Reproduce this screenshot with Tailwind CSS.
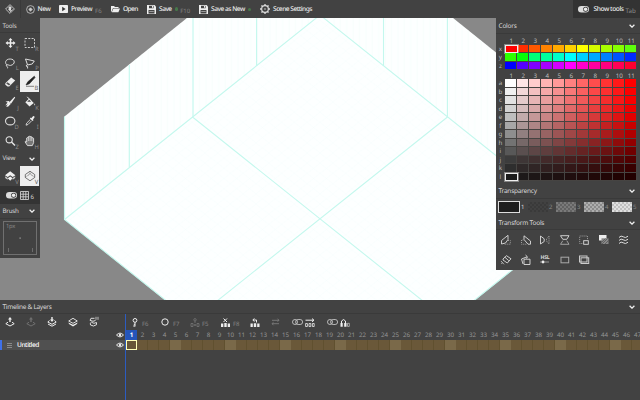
<!DOCTYPE html>
<html lang="en">
<head>
<meta charset="utf-8">
<title>Isometric editor</title>
<script src="https://cdn.jsdelivr.net/npm/@tailwindcss/browser@4"></script>
</head>
<body class="w-[640px] h-[400px] overflow-hidden bg-[#424242] text-[#d8d8d8] text-[6.6px] tracking-[-0.22px] [text-rendering:geometricPrecision] leading-none font-['Noto_Sans','Open_Sans',sans-serif] flex flex-col">

<svg class="absolute w-0 h-0">
  <defs>
    <pattern id="chk" width="4" height="4" patternUnits="userSpaceOnUse"><path d="M0 0H2V2H0ZM2 2H4V4H2Z" fill="#fff" fill-opacity=".3"/></pattern>
    <symbol id="chevron" viewBox="0 0 6 4"><path d="M.6.7 3 3.1 5.4.7" fill="none" stroke="#eee" stroke-width="1.3"/></symbol>
    <symbol id="disk" viewBox="0 0 9 9"><path d="M0 0H7.5L9 1.5V9H0Z" fill="#eee"/><path d="M2 .7H6.6V3.2H2ZM1.5 5H7.5V8.5H1.5Z" fill="#444"/><path d="M5 1H6V2.8H5ZM2.2 6H6.8V6.6H2.2Z" fill="#eee"/></symbol>
    <symbol id="toggle" viewBox="0 0 11 7"><rect width="11" height="6.6" rx="3.3" fill="#ddd"/><circle cx="7.6" cy="3.3" r="2.5" fill="#333"/><circle cx="7.6" cy="3.3" r="1.8" fill="#eee"/></symbol>
    <symbol id="eye" viewBox="0 0 8 6"><path d="M.5 3Q4-.8 7.5 3 4 6.8.5 3Z" fill="none" stroke="#e5e5e5"/><circle cx="4" cy="3" r="1.3" fill="#e5e5e5"/></symbol>
    <symbol id="link" viewBox="0 0 11 6"><g fill="none" stroke="#c4c4c4" stroke-width=".9"><circle cx="3" cy="3" r="2.5"/><rect x="3.6" y=".5" width="7" height="5" rx="2.5"/></g></symbol>
  </defs>
</svg>

<header class="h-[18px] shrink-0 bg-[#424242] flex items-center font-medium text-[#ececec] whitespace-nowrap">
  <div class="w-[21px] h-full flex items-center justify-center border-r border-[#3a3a3a]">
    <svg class="w-[10px] h-[10px]" viewBox="0 0 10 10" fill="none" stroke="#ccc" stroke-width=".9"><path d="M5 .6 9.4 5 5 9.4 .6 5Z"/><path d="M5 2 7.2 4.300H6V6.200L5 7.200 3.200 5.400 4.300 4.300H2.800Z" fill="#ddd" stroke="none"/><path d="M7.500 5.500 5 8"/></svg>
  </div>
  <div class="w-[38px] shrink-0 pl-[5px] flex items-center gap-[2.5px]">
    <svg class="w-[9px] h-[9px]" viewBox="0 0 9 9" fill="none" stroke="#ccc" stroke-width=".8"><circle cx="4.5" cy="4.5" r="3.9"/><path d="M4.5 2.8 6.2 4.5 4.5 6.2 2.8 4.5Z" fill="#ccc"/></svg><span class="tracking-[-0.42px]">New</span>
  </div>
  <div class="w-[52px] shrink-0 flex items-center gap-[3px]">
    <svg class="w-[9px] h-[8px]" viewBox="0 0 9 8"><rect width="9" height="8" rx=".8" fill="#eee"/><path d="M3.2 1.8 6.6 4 3.2 6.2Z" fill="#333"/></svg><span class="tracking-[-0.5px]">Preview</span><span class="text-[6px] tracking-normal text-[#858585] font-normal pt-[4px]">F6</span>
  </div>
  <div class="w-[36px] shrink-0 flex items-center gap-[3px]">
    <svg class="w-[9px] h-[8px]" viewBox="0 0 9 8" fill="#eee"><path d="M0 7V1H3L4 2H7.5V3H2L.6 6.5ZM2.4 3.6H9L7.4 7.3H.8Z"/></svg><span class="tracking-[-0.6px]">Open</span>
  </div>
  <div class="w-[52px] shrink-0 flex items-center gap-[3px]">
    <svg class="w-[9px] h-[9px]"><use href="#disk"/></svg><span class="tracking-[-0.5px]">Save</span><span class="w-[3.5px] h-[3.5px] rounded-full bg-[#46784a]"></span><span class="text-[6px] tracking-normal text-[#858585] font-normal pt-[4px] -ml-[1px]">F10</span>
  </div>
  <div class="w-[61px] shrink-0 flex items-center gap-[3px]">
    <svg class="w-[9px] h-[9px]"><use href="#disk"/></svg><span class="tracking-[-0.48px]">Save as New</span><span class="w-[3px] h-[3px] rounded-full bg-[#46784a]"></span>
  </div>
  <div class="flex items-center gap-[3px]">
    <svg class="w-[10px] h-[10px]" viewBox="0 0 9 9" fill="none" stroke="#ddd"><circle cx="4.5" cy="4.5" r="3"/><circle cx="4.5" cy="4.5" r=".7" fill="#ddd" stroke="none"/><path d="M4.5 0V1.5M4.5 7.5V9M0 4.5H1.5M7.5 4.5H9M1.3 1.3 2.3 2.3M6.7 6.7 7.7 7.7M7.7 1.3 6.7 2.3M2.3 6.7 1.3 7.7" stroke-width="1.2"/></svg><span class="tracking-[-0.5px]">Scene Settings</span>
  </div>
  <div class="ml-auto w-[67px] h-full bg-[#333] flex items-center pl-[5px]">
    <svg class="w-[11px] h-[7px] mr-[4.5px]"><use href="#toggle"/></svg><span class="tracking-[-0.42px]">Show tools</span><span class="text-[6.2px] tracking-normal text-[#8a8a8a] font-normal pt-[5px] ml-[2px]">Tab</span>
  </div>
</header>

<main class="h-[282px] shrink-0 relative bg-[#888] flex justify-between items-start">
  <svg class="absolute inset-0 w-[640px] h-[282px]" viewBox="0 18 640 282">
    <defs><pattern id="walls" width="6.4" height="50" patternUnits="userSpaceOnUse"><path d="M1 0V50" stroke="#f4fdfb" stroke-width=".7"/></pattern>
    <pattern id="tiles" width="12.8" height="10.2" patternUnits="userSpaceOnUse"><path d="M0 0 12.8 10.2M12.8 0 0 10.2" stroke="#f5fefd" stroke-width=".6"/></pattern></defs>
    <path d="M64.5 116.5 320-89 575.5 116.5V219.5L320 424.5 64.5 219.5Z" fill="#fdffff"/>
    <path d="M64.5 219 320 15 575.5 219 320 423Z" fill="url(#tiles)"/>
    <path d="M64.5 116.5 187 18H316L64.5 219ZM453 18H324L575.5 219V116.5Z" fill="url(#walls)"/>
    <g fill="none" stroke="#c4f8ee" stroke-width="1.1"><path d="M64.5 219.5 320 15 575.5 219M192.5 117 448 321M447.5 117 192 321"/><path d="M64.5 116.5V219.5L320 423.5 575.5 219.5V116.5M129.3 65V167M193 18V117M256.6 18V66M383.5 18V66M447.4 18V117"/></g>
  </svg>

  <aside class="relative w-[40px] h-[240px] bg-[#424242] flex flex-col">
    <div class="h-[15px] pl-[2.5px] pt-[2px] flex items-center border-b border-[#3a3a3a] text-[6.2px]">Tools</div>
    <div class="grid grid-cols-[20px_20px] auto-rows-[19.6px] h-[118px] text-[5.8px] text-[#8e8e8e]">
      <div class="relative"><svg class="w-5 h-5" viewBox="0 0 20 20"><path d="M10.5 5 12.6 7.3H11.2V9.3H13.2V7.9L15.5 10 13.2 12.1V10.7H11.2V12.7H12.6L10.5 15 8.4 12.7H9.8V10.7H7.8V12.1L5.5 10 7.8 7.9V9.3H9.8V7.3H8.4Z" fill="#eee"/></svg><span class="absolute right-[1.5px] bottom-0">T</span></div>
      <div class="relative"><svg class="w-5 h-5" viewBox="0 0 20 20"><rect x="5" y="5.5" width="9.5" height="9" fill="none" stroke="#ccc" stroke-dasharray="2 1.3"/></svg><span class="absolute right-[1.5px] bottom-0">R</span></div>
      <div class="relative"><svg class="w-5 h-5" viewBox="0 0 20 20" fill="none" stroke="#ddd"><path d="M7.2 12.2C4.5 10.5 5 6 10.2 6S15.7 11.5 10.5 12.4C9 12.7 7.5 11 6.5 12S8.5 14 7.5 15.3"/></svg><span class="absolute right-[1.5px] bottom-0">L</span></div>
      <div class="relative"><svg class="w-5 h-5" viewBox="0 0 20 20" fill="none" stroke="#ddd"><path d="M7.5 11.8 5.5 6 14.3 8 12.2 11 7.5 12ZM7.2 11.5 6 13 7.6 13.5V15.5"/></svg><span class="absolute right-[1.5px] bottom-0">P</span></div>
      <div class="relative"><svg class="w-5 h-5" viewBox="0 0 20 20"><path d="M5.3 11.2 11.2 5.5 15.2 8.4 9.2 14.4H7.6L5.3 12.7Z" fill="#eee"/><path d="M6.2 11.5 9 13.6 10.4 12.2 7.4 10.2Z" fill="#555"/></svg><span class="absolute right-[1.5px] bottom-0">E</span></div>
      <div class="relative bg-[#eee] -mt-px mr-px"><svg class="w-5 h-5" viewBox="0 0 20 20"><path d="M14.3 5.2 15 6.6 9.4 12.8 6 14 7.8 10.8Z" fill="#222" stroke="#222" stroke-width=".6"/><path d="M6 15.3H14" stroke="#666" stroke-width=".8"/></svg><span class="absolute right-[1px] bottom-0 text-[#666]">B</span></div>
      <div class="relative"><svg class="w-5 h-5" viewBox="0 0 20 20"><path d="M14.5 4.700 15.200 5.600 11 11.700 9.300 10.200Z" fill="#eee"/><path d="M5.500 9.500 9 9 10.700 12 8 14.700 6 14.500 8 12.300 5.300 13.500 7.500 10.600Z" fill="#eee"/></svg><span class="absolute right-[1.5px] bottom-0">J</span></div>
      <div class="relative"><svg class="w-5 h-5" viewBox="0 0 20 20"><path d="M5.3 10.3 9.2 6.5 13.8 10.9 9.5 14.6Z" fill="#eee"/><path d="M7.2 4.8 11 8.8" stroke="#eee"/><path d="M7.2 9.7H11.2L9.2 7.8Z" fill="#444"/><path d="M14.6 11.2C16.3 14 13.3 14 14.6 11.2" fill="#eee"/></svg><span class="absolute right-[1.5px] bottom-0">K</span></div>
      <div class="relative"><svg class="w-5 h-5" viewBox="0 0 20 20"><ellipse cx="10.2" cy="10" rx="4.7" ry="3.9" fill="none" stroke="#ddd" stroke-width="1.1"/></svg><span class="absolute right-[1.5px] bottom-0">D</span></div>
      <div class="relative"><svg class="w-5 h-5" viewBox="0 0 20 20"><path d="M11.2 7.2 13 5.2Q14.4 4.7 14.6 6.2L13 8.5 13.5 9.2 12.5 10 9.9 7.5 10.7 6.6Z" fill="#eee"/><path d="M10.3 8.5 6.7 12.1 6 14.2 8 13.5 11.6 9.8" fill="none" stroke="#ddd" stroke-width=".9"/></svg><span class="absolute right-[1.5px] bottom-0">I</span></div>
      <div class="relative"><svg class="w-5 h-5" viewBox="0 0 20 20" fill="none" stroke="#e5e5e5"><circle cx="9.2" cy="8.8" r="3.1" stroke-width="1.1"/><path d="M11.5 11 15 14.5" stroke-width="1.5"/></svg><span class="absolute right-[1.5px] bottom-0">Z</span></div>
      <div class="relative"><svg class="w-5 h-5" viewBox="0 0 20 20"><path d="M7.5 14.6 5 10.8Q5.3 9.8 6.7 11V7Q7.5 6 8.3 7V5.7Q9.2 4.7 10.1 5.7Q11 4.9 11.8 6V7Q13 6.2 13.6 7.3V11.6L12.3 14.6Z" fill="#777" stroke="#e5e5e5" stroke-width=".9"/><path d="M8.4 7V10M10.1 6V10M11.8 7V10" stroke="#e5e5e5" stroke-width=".7"/></svg><span class="absolute right-[1.5px] bottom-0">H</span></div>
    </div>
    <div class="h-[15px] pl-[2.5px] pr-[5.5px] flex items-center justify-between text-[6.2px]">View<svg class="w-[6px] h-[4px]"><use href="#chevron"/></svg></div>
    <div class="h-[20px] flex text-[5.8px] text-[#8e8e8e]">
      <div class="relative w-5"><svg class="w-5 h-5" viewBox="0 0 20 20"><path d="M5 9.2 10.200 5.200 15.4 9.2 12.700 11 10.200 9.200 7.700 11Z" fill="#f0f0f0"/><path d="M5.200 10.200 7.700 12V13.800L5.200 12ZM15.200 10.200 12.700 12V13.800L15.200 12Z" fill="#ccc"/><path d="M7.700 12.300 10.200 10.600 12.700 12.300 10.200 14.800Z" fill="#f0f0f0"/></svg><span class="absolute right-[1.5px] bottom-0">V</span></div>
      <div class="relative w-[19px] bg-[#eee]"><svg class="w-5 h-5" viewBox="0 0 20 20" fill="none" stroke="#555" stroke-width=".8"><path d="M5.3 8.5 10 5.3 14.7 8.5V11.5L10 14.8 5.3 11.5Z"/><path d="M5.3 11.2 10 8 14.7 11.2M10 5.3V8" stroke-dasharray="1 .7"/></svg><span class="absolute right-[1px] bottom-0 text-[#555]">V</span></div>
    </div>
    <div class="h-[18px] bg-[#343434] flex items-center pl-[5.5px]">
      <svg class="w-[11px] h-[7px] mr-[3px]"><use href="#toggle"/></svg>
      <svg class="w-[9px] h-[9px] mr-[2px]" viewBox="0 0 9 9"><path d="M.5.5H8.5V8.5H.5ZM3.2.5V8.5M5.8.5V8.5M.5 3.2H8.5M.5 5.8H8.5" fill="none" stroke="#d4d4d4" stroke-width=".85"/></svg><span class="text-[6px] pt-[3px]">6</span>
    </div>
    <div class="h-[15px] pl-[2.5px] pr-[5.5px] flex items-center justify-between border-b border-[#3a3a3a] text-[6.2px]">Brush<svg class="w-[6px] h-[4px]"><use href="#chevron"/></svg></div>
    <div class="m-[3px] mt-[2px] w-[34px] h-[34px] border border-[#707070] relative text-[5.8px] text-[#888] p-[2px]">1px
      <svg class="absolute inset-0 w-8 h-8" viewBox="0 0 32 32"><path d="M4.5 26V30M28.5 26V30" stroke="#777" stroke-width=".8"/><rect x="15.5" y="15.5" width="1.2" height="1.2" fill="#aaa"/></svg>
    </div>
  </aside>

  <aside class="relative w-[144px] h-[252px] bg-[#424242] flex flex-col text-[6.5px]">
    <div class="h-[16px] pl-[2.5px] pr-[5.5px] flex items-center justify-between border-b border-[#3a3a3a]"><span class="pt-[1px]">Colors</span><svg class="w-[6px] h-[4px]"><use href="#chevron"/></svg></div>
    <div class="pl-[9.3px] pt-[3.5px] h-[147px] w-[144px] flex flex-col text-[6.2px] text-[#bbb]" id="palette"></div>
    <div class="h-[18px] pl-[2.5px] pr-[5.5px] pt-[2px] flex items-center justify-between border-b border-[#3a3a3a]"><span class="pt-[1px]">Transparency</span><svg class="w-[6px] h-[4px]"><use href="#chevron"/></svg></div>
    <div class="h-[17px] flex items-center pl-[2px] pb-[1px] text-[6px] text-[#888]">
      <div class="w-[30px] flex items-center gap-px"><div class="w-[22px] h-[12px] border-[1.5px] border-[#ddd] bg-[#1e1e1e]"></div><span class="text-[#ddd]">1</span></div>
      <div class="w-[28px] flex items-center gap-px"><svg class="w-[20px] h-[10px]"><rect width="20" height="10" fill="#3a3a3a"/><rect width="20" height="10" fill="url(#chk)" opacity=".12"/></svg><span>2</span></div>
      <div class="w-[28px] flex items-center gap-px"><svg class="w-[20px] h-[10px]"><rect width="20" height="10" fill="#626262"/><rect width="20" height="10" fill="url(#chk)" opacity=".5"/></svg><span>3</span></div>
      <div class="w-[28px] flex items-center gap-px"><svg class="w-[20px] h-[10px]"><rect width="20" height="10" fill="#8b8b8b"/><rect width="20" height="10" fill="url(#chk)"/></svg><span>4</span></div>
      <div class="w-[26px] flex items-center gap-px"><svg class="w-[20px] h-[10px]"><rect width="20" height="10" fill="#c0c0c0"/><rect width="20" height="10" fill="url(#chk)"/><rect width="20" height="10" fill="url(#chk)"/></svg><span>5</span></div>
    </div>
    <div class="h-[14px] pl-[2.5px] pr-[5.5px] flex items-center justify-between border-b border-[#3a3a3a]"><span class="pt-[2px]">Transform Tools</span><svg class="w-[6px] h-[4px]"><use href="#chevron"/></svg></div>
    <div class="grid grid-cols-[repeat(7,19.6px)] auto-rows-[19.5px]">
      <svg class="w-5 h-5" viewBox="0 0 20 20" fill="none" stroke="#ddd" stroke-width=".9"><path d="M5.5 14V10.500L12 5.300V9.500L9.500 13Z"/><path d="M12 10.5H14.3V14.2H8" stroke-dasharray="1 1" stroke="#aaa"/></svg>
      <svg class="w-5 h-5" viewBox="0 0 20 20" fill="none" stroke="#ddd" stroke-width=".9"><path d="M8 5.8 14.5 11V14.2H12L8 9.5Z"/><path d="M7.5 10H5.5V14.2H11" stroke-dasharray="1 1" stroke="#aaa"/></svg>
      <svg class="w-5 h-5" viewBox="0 0 20 20" fill="none" stroke="#ddd" stroke-width=".9"><path d="M5.5 6 9.2 8.8V11.5L5.5 14Z"/><path d="M14 6V14L11.5 11V9Z" stroke="#999" stroke-dasharray="1.3 .8"/></svg>
      <svg class="w-5 h-5" viewBox="0 0 20 20" fill="none" stroke="#ddd" stroke-width=".9"><path d="M5.5 5.7H14L11.8 9.3H7.8Z"/><path d="M7.8 10.7 5.5 14.3H14L11.8 10.7" stroke="#aaa"/></svg>
      <svg class="w-5 h-5" viewBox="0 0 20 20" fill="none" stroke="#ddd" stroke-width=".9"><path d="M8.3 13.5H5.7V6H13.5V10" stroke-dasharray="1 1" stroke="#aaa"/><rect x="9.7" y="10.7" width="4.6" height="3.6"/></svg>
      <svg class="w-5 h-5" viewBox="0 0 20 20"><path d="M5 5H12.5V10.5H5Z" fill="#eee"/><path d="M7.5 8.3H14.5V14H7.5Z" fill="#888"/><path d="M8 12 11.5 8.5M8 14 13.5 8.5M11 14 14.5 10.5" stroke="#444" stroke-width=".6"/></svg>
      <svg class="w-5 h-5" viewBox="0 0 20 20" fill="none" stroke="#ddd"><path d="M5 7.5Q7 5 9.2 6.8T14 6.2M5 10.5Q7 8 9.2 9.8T14 9.2M5 13.5Q7 11 9.2 12.8T14 12.2"/></svg>
      <svg class="w-5 h-5" viewBox="0 0 20 20" fill="none" stroke="#ddd" stroke-width=".9"><path d="M7 9 10.5 5.7 15 8.8 11.3 13 7 10ZM8.8 7.2 12.8 10.7"/><path d="M5 11 8 14.3M6.3 12.5 5.5 14" stroke="#bbb"/></svg>
      <svg class="w-5 h-5" viewBox="0 0 20 20" fill="none" stroke="#ddd" stroke-width=".9"><path d="M8 9.2H14V14.5H8ZM7 14 5.5 9 11 6.8M9.5 5 11.5 6.8 10.5 8.5"/></svg>
      <div class="flex flex-col items-center justify-center text-[5.2px] font-bold">HSL<svg class="w-[9px] h-[4px]" viewBox="0 0 9 4"><path d="M0 2H9" stroke="#bbb" stroke-width=".7"/><circle cx="3" cy="2" r="1.4" fill="#eee"/></svg></div>
      <svg class="w-5 h-5" viewBox="0 0 20 20" fill="none" stroke="#aaa"><rect x="6" y="7.2" width="7.7" height="5.6"/></svg>
      <svg class="w-5 h-5" viewBox="0 0 20 20" fill="none" stroke="#ccc"><rect x="5.5" y="6" width="7.5" height="6"/><rect x="7" y="7.8" width="7.7" height="5.7"/></svg>
    </div>
  </aside>
</main>

<footer class="h-[100px] shrink-0 bg-[#424242] flex flex-col overflow-hidden">
  <div class="h-[14px] pl-[2.5px] pr-[5.5px] flex items-center justify-between border-b border-[#3a3a3a] text-[6.5px]"><span class="pt-[2px] tracking-[-0.3px]">Timeline &amp; Layers</span><svg class="w-[6px] h-[4px]"><use href="#chevron"/></svg></div>
  <div class="flex h-[86px]">
    <div class="w-[125px] shrink-0 flex flex-col">
      <div class="h-[16px] flex items-center">
        <svg class="w-[21px] h-[16px]" viewBox="0 0 21 16"><path d="M10 3 12 5.5H10.7V8H9.3V5.5H8Z" fill="#eee"/><path d="M8 8.2 5.8 9.7 10 12 14.2 9.7 12 8.2" fill="none" stroke="#eee"/></svg>
        <svg class="w-[21px] h-[16px]" viewBox="0 0 21 16"><path d="M10 3 12 5.5H10.7V8H9.3V5.5H8Z" fill="#707070"/><path d="M8 8.2 5.8 9.7 10 12 14.2 9.7 12 8.2" fill="none" stroke="#707070"/></svg>
        <svg class="w-[21px] h-[16px]" viewBox="0 0 21 16"><path d="M9.3 3H10.7V5.5H12L10 8 8 5.5H9.3Z" fill="#eee"/><path d="M7.5 6.5 5.8 8 10 10.3 14.2 8 12.5 6.5M6 10 10 12.2 14 10" fill="none" stroke="#eee"/></svg>
        <svg class="w-[21px] h-[16px]" viewBox="0 0 21 16"><path d="M5.7 7 10 4.3 14.3 7 10 9.3Z" fill="none" stroke="#ddd"/><path d="M5.4 8.5 10 10.7 14.6 8.5 14 10 10 12.4 6 10Z" fill="#eee"/></svg>
        <svg class="w-[21px] h-[16px]" viewBox="0 0 21 16" fill="none" stroke="#ddd"><path d="M10.5 4.3H7L6 6.3 9 7.300 11.500 6.500M7.500 8 6.300 9.200 6.500 11 9.500 12 12.500 10.700 12.500 8.500 10 9.300 7.500 8.300"/><path d="M12 2.800V5.800M14 2.800V5.800" stroke-width=".8"/></svg>
      </div>
      <div class="h-[10px] flex justify-end items-center pr-[1px]"><svg class="w-[8px] h-[6px]"><use href="#eye"/></svg></div>
      <div class="h-[10px] bg-[#505050] border-l-[2px] border-[#3f70e8] flex items-center pl-[5px] pr-[1px] text-[#fff] font-medium">
        <svg class="w-[5px] h-[5px] mr-[5px]" viewBox="0 0 5 5"><path d="M0 .5H5M0 2.5H5M0 4.5H5" stroke="#999" stroke-width=".8"/></svg><span class="tracking-[-0.45px]">Untitled</span><svg class="ml-auto w-[8px] h-[6px]"><use href="#eye"/></svg>
      </div>
    </div>
    <div class="w-[515px] shrink-0 border-l border-[#2c5cc0] flex flex-col overflow-hidden">
      <div class="h-[16px] flex items-center text-[6px] tracking-normal text-[#858585]">
        <div class="w-[34px] pl-[6px] flex items-center gap-[4px]"><svg class="w-[6px] h-[9px]" viewBox="0 0 6 9" fill="none" stroke="#eee"><circle cx="3" cy="2.4" r="1.9"/><path d="M3 4.3V8.5M3 8H1.2M3 6.3H1.8"/></svg><span class="pt-[3px]">F6</span></div>
        <div class="w-[30px] pl-[1px] flex items-center gap-[4px]"><svg class="w-[8px] h-[8px]" viewBox="0 0 8 8" fill="none" stroke="#eee"><circle cx="4" cy="4" r="3.2"/></svg><span class="pt-[3px]">F7</span></div>
        <div class="w-[31px] flex items-center gap-[2px]"><svg class="w-[10px] h-[9px]" viewBox="0 0 10 9" fill="none" stroke="#777" stroke-width=".8"><circle cx="5" cy="1.8" r="1.2"/><path d="M5 3V5M1 5.5H3V8.5H1ZM7 5.5H9V8.5H7ZM4 7H6M5 6V8"/></svg><span class="pt-[3px]">F5</span></div>
        <div class="w-[29px] flex items-center gap-[3px]"><svg class="w-[9px] h-[9px]" viewBox="0 0 9 9"><path d="M2.5.5 6 4M6 .5 2.5 4" stroke="#eee"/><path d="M0 5.5H2.3V9H0ZM3.3 5H5.7V9H3.3ZM6.7 5.5H9V9H6.7Z" fill="#eee"/></svg><span class="pt-[3px]">F8</span></div>
        <div class="w-[21px]"><svg class="w-[10px] h-[9px]" viewBox="0 0 10 9"><path d="M3 2H6.5V4.5M4.5.4 2.8 2 4.5 3.6" stroke="#eee" fill="none"/><path d="M.5 5.5H2.8V9H.5ZM3.8 5.3H6.2V9H3.8ZM7.2 5.5H9.5V9H7.2Z" fill="#eee"/></svg></div>
        <div class="w-[21px]"><svg class="w-[9px] h-[8px]" viewBox="0 0 9 8" fill="none" stroke="#777"><path d="M1 2.3H8M6.5.7 8 2.3 6.5 3.5M8 5.7H1M2.5 4.3 1 5.7 2.5 7.2"/></svg></div>
        <div class="w-[34.5px] flex items-center gap-[2px]"><svg class="w-[11px] h-[6px]"><use href="#link"/></svg><svg class="w-[10px] h-[9px]" viewBox="0 0 10 9" fill="none" stroke="#eee"><path d="M.5 2.2H8M7 .6 9 2.2 7 3.8"/><path d="M.6 5.5H2.4V8.5H.6ZM4 5.5H5.8V8.5H4ZM7.4 5.5H9.2V8.5H7.4Z" stroke-width=".8"/></svg></div>
        <div class="flex items-center gap-[2px]"><svg class="w-[11px] h-[6px]"><use href="#link"/></svg><svg class="w-[10px] h-[9px]" viewBox="0 0 10 9"><path d="M1.500 5V3Q3.600 0 5.500 3V5" fill="none" stroke="#eee"/><path d="M.5 5H2.7V8.7H.5ZM4.2 5H6.5V8.7H4.2Z" fill="#eee"/><path d="M7.5 5.300H9.300V8.400H7.5Z" fill="none" stroke="#ccc" stroke-width=".7"/></svg></div>
      </div>
      <div class="flex h-[10px] text-[6.2px] tracking-normal text-[#949494]" id="numbers"></div>
      <div class="flex h-[10px]" id="frames"></div>
    </div>
  </div>
</footer>

<script>
const hues = [
  ['x', ['#ff0000','#ff2d00','#ff5800','#ff8200','#ffaa00','#ffd200','#ffff00','#d5fb00','#a9ff00','#86ff00','#5eff0c']],
  ['y', ['#30ff00','#08ff08','#00ff78','#00ff9e','#00ffcc','#00ffff','#00d0ff','#00a8ff','#0080ff','#0055ff','#002bff']],
  ['z', ['#0000ff','#5500ff','#8000ff','#a800ff','#d400ff','#ff00ff','#ff00cc','#ff00a0','#ff0080','#ff0055','#ff0030']]
];
const grays = [255,240,226,210,190,167,142,115,88,60,46,28];
const reds = [255,255,250,240,226,202,176,146,112,82,56,34];
const numberRow = '<div class="h-[7px] flex shrink-0 items-center tracking-normal pt-[1px]">' +
  Array.from({length: 11}, (_, i) => `<span class="w-[12px] shrink-0 text-center">${i + 1}</span>`).join('') + '</div>';
const cellClass = 'w-[12px] h-[8.5px] shrink-0 border-r border-b border-[#464442]';
const selectedClass = 'w-[12.5px] -mr-[0.5px] h-[8.5px] shrink-0 border-[1.5px] border-[#eeeeee] outline outline-[#eeeeee]/40 relative';
const row = (label, colors, selected) =>
  `<div class="relative h-[8.5px] shrink-0 flex"><span class="absolute left-[-7.5px] top-[1px] w-[5px] text-center">${label}</span>` +
  colors.map((c, i) => `<div class="${selected && !i ? selectedClass : cellClass}" style="background-color:${c}"></div>`).join('') + '</div>';
const shades = grays.map((g, r) => ['abcdefghijkl'[r], Array.from({length: 11}, (_, i) => {
  const t = i / 10;
  return `rgb(${Math.round(g + (reds[r] - g) * t)},${Math.round(g * (1 - t))},${Math.round(g * (1 - t))})`;
})]);
document.getElementById('palette').innerHTML =
  numberRow + hues.map(([l, c], i) => row(l, c, i === 0)).join('') +
  '<div class="h-[2px] shrink-0"></div>' + numberRow + shades.map(([l, c], i) => row(l, c, i === 11)).join('');

const numberClass = 'w-[11px] shrink-0 flex items-center justify-center';
const currentClass = 'w-[11px] shrink-0 flex items-center justify-center bg-[#2455ba] text-white font-bold';
let numbers = '', frames = '';
for (let n = 1; n <= 47; n++) {
  numbers += `<span class="${n === 1 ? currentClass : numberClass}">${n}</span>`;
  const look = n === 1 ? 'border-[1.5px] border-[#ffffb8] bg-[#675537]' : n % 5 ? 'bg-[#6a5839] border-r border-[#60502f]' : 'bg-[#7a6949]';
  frames += `<i class="w-[11px] h-[10px] shrink-0 ${look}"></i>`;
}
document.getElementById('numbers').innerHTML = numbers;
document.getElementById('frames').innerHTML = frames;
</script>
</body>
</html>
